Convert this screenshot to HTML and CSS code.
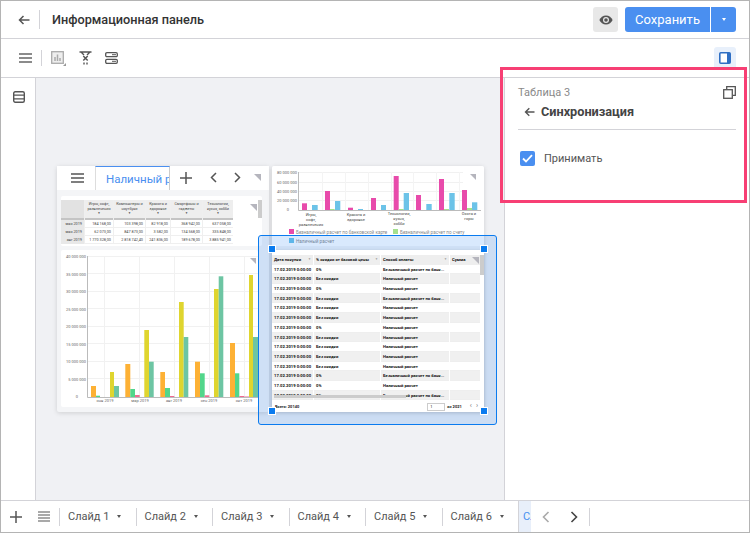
FILE: index.html
```html
<!DOCTYPE html>
<html lang="ru">
<head>
  <meta charset="UTF-8" />
  <title>Информационная панель</title>
  <link rel="stylesheet" href="styles.css">
</head>
<body>
  <div class="app">
    <header class="topbar">
      <svg class="back-icon" width="12" height="10" viewBox="0 0 12 10"><path d="M11.5 5H1.5M5.5 1L1.5 5l4 4" fill="none" stroke="#555" stroke-width="1.5"/></svg>
      <span class="topbar-sep"></span>
      <h1 class="title">Информационная панель</h1>
      <button class="eye-btn" type="button">
        <svg width="14" height="10" viewBox="0 0 14 10"><path d="M7 0.5C4 0.5 1.5 2.4 0.4 5 1.5 7.6 4 9.5 7 9.5s5.500-1.900 6.600-4.500C12.500 2.400 10 0.500 7 0.500z" fill="#555"/><circle cx="7" cy="5" r="3" fill="#e8e8e8"/><circle cx="7" cy="5" r="1.800" fill="#555"/></svg>
      </button>
      <div class="save">
        <button class="save-main" type="button">Сохранить</button>
        <button class="save-more" type="button"><span class="caret caret-white"></span></button>
      </div>
    </header>

    <div class="toolbar">
      <svg class="tool-icon" width="13" height="10" viewBox="0 0 13 10"><path d="M0 1h13M0 5h13M0 9h13" stroke="#666" stroke-width="1.300"/></svg>
      <span class="toolbar-sep"></span>
      <svg class="tool-icon" width="15" height="15" viewBox="0 0 15 15"><rect x="0.700" y="0.700" width="11.600" height="11.600" fill="#eee" stroke="#aaa" stroke-width="1.300"/><path d="M4 10V6M6.500 10V3.500M9 10V7" stroke="#aaa" stroke-width="1.500"/><path d="M15 12v3h-3z" fill="#999"/></svg>
      <svg class="tool-icon" width="13" height="14" viewBox="0 0 13 14"><path d="M0.500 1h12M2 1l3 3M11 1L8 4M5 13.500v-2M8 13.500v-2" fill="none" stroke="#555" stroke-width="1.400"/><path d="M4.300 5l4.400 4.500M8.700 5l-4.400 4.500" stroke="#555" stroke-width="1.500"/></svg>
      <svg class="tool-icon" width="13" height="12" viewBox="0 0 13 12"><rect x="0.700" y="0.700" width="11.600" height="4" rx="1.200" fill="none" stroke="#555" stroke-width="1.300"/><rect x="0.700" y="7.300" width="11.600" height="4" rx="1.200" fill="none" stroke="#555" stroke-width="1.300"/><path d="M7 2.700h4M7 9.300h4" stroke="#555" stroke-width="1"/></svg>
      <button class="panel-btn" type="button">
        <svg width="12" height="12" viewBox="0 0 12 12"><rect x="0.800" y="0.800" width="10.400" height="10.400" rx="1" fill="#fff" stroke="#2f6fc4" stroke-width="1.600"/><rect x="8" y="1" width="3" height="10" fill="#2f6fc4"/></svg>
      </button>
    </div>

    <div class="workspace">
      <aside class="rail">
        <svg class="rail-icon" width="12" height="12" viewBox="0 0 12 12"><rect x="0.700" y="0.700" width="10.600" height="10.600" rx="1.500" fill="none" stroke="#555" stroke-width="1.400"/><path d="M1 4.200h10M1 7.800h10" stroke="#555" stroke-width="1.300"/></svg>
      </aside>

      <main class="canvas">
        <section class="sheet sheet-left">
          <div class="tabstrip">
            <svg class="strip-menu" width="13" height="10" viewBox="0 0 13 10"><path d="M0 1h13M0 5h13M0 9h13" stroke="#555" stroke-width="1.300"/></svg>
            <div class="strip-tab"><span>Наличный расчет</span></div>
            <svg class="strip-plus" width="12" height="12" viewBox="0 0 12 12"><path d="M6 0v12M0 6h12" stroke="#555" stroke-width="1.500"/></svg>
            <svg class="strip-prev" width="7" height="11" viewBox="0 0 7 11"><path d="M6 1L1.500 5.500 6 10" fill="none" stroke="#555" stroke-width="1.500"/></svg>
            <svg class="strip-next" width="7" height="11" viewBox="0 0 7 11"><path d="M1 1l4.500 4.500L1 10" fill="none" stroke="#555" stroke-width="1.500"/></svg>
            <span class="corner corner-strip"></span>
          </div>
          <div class="mini-card pivot">
            <div class="pivot-grid">
              <div class="ph ph-blank"></div>
              <div class="ph">Игры, софт, развлечения<i>▼</i></div>
              <div class="ph">Компьютеры и ноутбуки<i>▼</i></div>
              <div class="ph">Красота и здоровье<i>▼</i></div>
              <div class="ph">Смартфоны и гаджеты<i>▼</i></div>
              <div class="ph">Технологии, кухня, хобби<i>▼</i></div>
              <div class="pl">мая 2019</div><div class="pv">184 168,00</div><div class="pv">103 398,00</div><div class="pv">82 918,00</div><div class="pv">368 942,00</div><div class="pv">637 058,00</div>
              <div class="pl">мая 2019</div><div class="pv">62 073,00</div><div class="pv">847 873,00</div><div class="pv">3 582,00</div><div class="pv">134 568,00</div><div class="pv">335 848,00</div>
              <div class="pl">авг 2019</div><div class="pv">1 770 328,00</div><div class="pv">2 818 742,40</div><div class="pv">241 836,00</div><div class="pv">189 678,00</div><div class="pv">3 885 941,00</div>
            </div>
            <span class="corner corner-pivot"></span>
            <span class="vscroll vscroll-pivot"></span>
          </div>
          <div class="mini-card bars-card">
            <svg class="chart" width="197" height="157" viewBox="61 250 197 157">
              <g stroke="#f1f1f1" stroke-width="1">
                <path d="M87 256.500h171M87 273.500h171M87 291.500h171M87 308.500h171M87 326.500h171M87 343.500h171M87 361.500h171M87 378.500h171"/>
                <path d="M104.500 256v141M139.500 256v141M174.500 256v141M209.500 256v141M244.500 256v141"/>
              </g>
              <g fill="#fdb135">
                <rect x="91" y="386" width="5" height="11"/><rect x="125.300" y="364" width="5" height="33"/><rect x="160.300" y="372" width="4.700" height="25"/><rect x="195" y="361.700" width="5" height="35.300"/><rect x="230" y="343" width="5" height="54"/>
              </g>
              <g fill="#52d68b">
                <rect x="96" y="395.700" width="4" height="1.300"/><rect x="130.300" y="389" width="4.700" height="8"/><rect x="165" y="388" width="5" height="9"/><rect x="200" y="373.300" width="4.700" height="23.700"/><rect x="235" y="373.300" width="4.300" height="23.700"/>
              </g>
              <g fill="#f06a92">
                <rect x="135" y="395" width="4.700" height="2"/><rect x="170" y="396" width="4.300" height="1"/><rect x="204.700" y="395.300" width="4.600" height="1.700"/><rect x="239.300" y="396" width="4.700" height="1"/>
              </g>
              <rect x="244" y="396" width="5" height="1" fill="#f3b4c8"/>
              <g fill="#dfd52f">
                <rect x="110" y="372" width="4" height="25"/><rect x="144.300" y="330" width="4.700" height="67"/><rect x="179" y="302" width="4.700" height="95"/><rect x="214" y="289" width="4.700" height="108"/><rect x="249" y="275" width="4" height="122"/>
              </g>
              <g fill="#6dc5a3">
                <rect x="114" y="386" width="5" height="11"/><rect x="149" y="361.700" width="4.700" height="35.300"/><rect x="183.700" y="337" width="4.600" height="60"/><rect x="218.700" y="276.300" width="4.600" height="120.700"/><rect x="253" y="337" width="5" height="60"/>
              </g>
              <path d="M87.500 256v141.500H258" fill="none" stroke="#bbb" stroke-width="1"/>
              <g class="axis-text" text-anchor="end">
                <text x="86" y="258">40 000 000</text><text x="86" y="276">35 000 000</text><text x="86" y="293">30 000 000</text><text x="86" y="311">25 000 000</text><text x="86" y="328">20 000 000</text><text x="86" y="346">15 000 000</text><text x="86" y="363">10 000 000</text><text x="86" y="381">5 000 000</text><text x="78" y="398">0</text>
              </g>
              <g class="axis-text" text-anchor="middle">
                <text x="105" y="402">янв 2019</text><text x="140" y="402">мар 2019</text><text x="174" y="402">авг 2019</text><text x="209" y="402">сен 2019</text><text x="244" y="402">окт 2019</text>
              </g>
              <path d="M250 258h6v6z" fill="#b5b5bd"/>
            </svg>
          </div>
        </section>

        <section class="sheet sheet-right">
          <div class="mini-card pie-card">
            <svg class="chart" width="212" height="80" viewBox="272 166 212 80">
              <path d="M298 172.500h165M298 182.500h165M298 191.500h165M298 200.500h165" stroke="#f1f1f1" stroke-width="1"/>
              <path d="M322.500 172v38M345.500 172v38M368.500 172v38M391.500 172v38M413.500 172v38M436.500 172v38M459.500 172v38" stroke="#f4f4f4" stroke-width="1"/>
              <g fill="#e84bab">
                <rect x="302" y="203.300" width="5" height="6.700"/><rect x="325" y="191" width="5" height="19"/><rect x="348" y="207.700" width="5" height="2.300"/><rect x="371" y="198" width="5" height="12"/><rect x="393.700" y="176" width="5" height="34"/><rect x="416" y="195" width="5" height="15"/><rect x="439" y="179" width="5" height="31"/><rect x="462" y="190" width="5" height="20"/>
              </g>
              <g fill="#a5e08e">
                <rect x="330" y="209" width="4.700" height="1"/><rect x="398.700" y="209" width="5" height="1"/><rect x="444" y="209" width="5" height="1"/><rect x="467" y="208" width="5" height="2"/>
              </g>
              <g fill="#6cc3e8">
                <rect x="312" y="205" width="5.700" height="5"/><rect x="335" y="201" width="5.300" height="9"/><rect x="358" y="209" width="5" height="1"/><rect x="381" y="205" width="5" height="5"/><rect x="403.700" y="193" width="5.300" height="17"/><rect x="426.300" y="204" width="5.400" height="6"/><rect x="449.300" y="193" width="5.400" height="17"/><rect x="472" y="202.300" width="5.300" height="7.700"/>
              </g>
              <path d="M298.500 172v38.500H481" fill="none" stroke="#bbb" stroke-width="1"/>
              <g class="axis-text" text-anchor="end">
                <text x="297" y="174">80 000 000</text><text x="297" y="184">60 000 000</text><text x="297" y="193">40 000 000</text><text x="297" y="202">20 000 000</text><text x="289" y="211">0</text>
              </g>
              <g class="axis-text axis-dark" text-anchor="middle">
                <text x="311" y="216">Игры,</text><text x="311" y="221">софт,</text><text x="311" y="226">развлечения</text>
                <text x="356" y="216">Красота и</text><text x="356" y="221">здоровье</text>
                <text x="399" y="215">Технологии,</text><text x="399" y="220">кухня,</text><text x="399" y="225">хобби</text>
                <text x="469" y="215">Охота и</text><text x="469" y="220">горы</text>
              </g>
              <rect x="289" y="229" width="5" height="5" fill="#e84bab"/>
              <text class="legend-text" x="296" y="233.500">Безналичный расчет по банковской карте</text>
              <rect x="393" y="229" width="5" height="5" fill="#a5e08e"/>
              <text class="legend-text" x="400" y="233.500">Безналичный расчет по счету</text>
              <rect x="289" y="238" width="5" height="5" fill="#6cc3e8"/>
              <text class="legend-text" x="296" y="242.500">Наличный расчет</text>
              <path d="M470 174h6v6z" fill="#b5b5bd"/>
            </svg>
          </div>
          <div class="mini-card grid-card">
            <div class="grid-scroll">
              <div class="data-grid">
                <div class="gh">Дата покупки<i>▼</i></div><div class="gh">% скидки от базовой цены<i>▼</i></div><div class="gh">Способ оплаты<i>▼</i></div><div class="gh">Сумма</div>
                <div class="gc">17.02.2019 0:00:00</div><div class="gc">0%</div><div class="gc">Безналичный расчет по банк...</div><div class="gc"></div>
                <div class="gc">17.02.2019 0:00:00</div><div class="gc">Без скидки</div><div class="gc">Наличный расчет</div><div class="gc"></div>
                <div class="gc">17.02.2019 0:00:00</div><div class="gc">0%</div><div class="gc">Наличный расчет</div><div class="gc"></div>
                <div class="gc">17.02.2019 0:00:00</div><div class="gc">Без скидки</div><div class="gc">Безналичный расчет по банк...</div><div class="gc"></div>
                <div class="gc">17.02.2019 0:00:00</div><div class="gc">Без скидки</div><div class="gc">Наличный расчет</div><div class="gc"></div>
                <div class="gc">17.02.2019 0:00:00</div><div class="gc">Без скидки</div><div class="gc">Наличный расчет</div><div class="gc"></div>
                <div class="gc">17.02.2019 0:00:00</div><div class="gc">0%</div><div class="gc">Наличный расчет</div><div class="gc"></div>
                <div class="gc">17.02.2019 0:00:00</div><div class="gc">Без скидки</div><div class="gc">Наличный расчет</div><div class="gc"></div>
                <div class="gc">17.02.2019 0:00:00</div><div class="gc">Без скидки</div><div class="gc">Наличный расчет</div><div class="gc"></div>
                <div class="gc">17.02.2019 0:00:00</div><div class="gc">Без скидки</div><div class="gc">Наличный расчет</div><div class="gc"></div>
                <div class="gc">17.02.2019 0:00:00</div><div class="gc">Без скидки</div><div class="gc">Наличный расчет</div><div class="gc"></div>
                <div class="gc">17.02.2019 0:00:00</div><div class="gc">0%</div><div class="gc">Безналичный расчет по банк...</div><div class="gc"></div>
                <div class="gc">17.02.2019 0:00:00</div><div class="gc">0%</div><div class="gc">Наличный расчет</div><div class="gc"></div>
                <div class="gc">17.02.2019 0:00:00</div><div class="gc">0%</div><div class="gc">Безналичный расчет по банк...</div><div class="gc"></div>
              </div>
              <span class="vscroll vscroll-grid"></span>
              <span class="hscroll"></span>
              <span class="corner corner-grid"></span>
            </div>
            <div class="grid-foot">
              <span class="foot-total">Всего: 20140</span>
              <span class="foot-page">1</span>
              <span class="foot-of">из 2021</span>
              <span class="foot-nav">‹</span>
              <span class="foot-nav">›</span>
            </div>
          </div>
        </section>

        <div class="selection">
          <span class="handle handle-tl"></span>
          <span class="handle handle-tr"></span>
          <span class="handle handle-bl"></span>
          <span class="handle handle-br"></span>
        </div>
      </main>

      <aside class="side">
        <div class="side-head">
          <span class="side-name">Таблица 3</span>
          <svg width="13" height="13" viewBox="0 0 13 13"><path d="M3.700 3V0.700h8.600v8.600H10" fill="none" stroke="#555" stroke-width="1.300"/><rect x="0.700" y="3.700" width="8.600" height="8.600" fill="none" stroke="#555" stroke-width="1.300"/></svg>
        </div>
        <div class="side-title">
          <svg width="11" height="10" viewBox="0 0 11 10"><path d="M10.500 5H1.500M5.300 1.200L1.500 5l3.800 3.800" fill="none" stroke="#555" stroke-width="1.400"/></svg>
          <h2>Синхронизация</h2>
        </div>
        <label class="check-row">
          <span class="checkbox">
            <svg width="11" height="9" viewBox="0 0 11 9"><path d="M1 4.500l3 3L10 1.200" fill="none" stroke="#fff" stroke-width="1.800"/></svg>
          </span>
          Принимать
        </label>
      </aside>
    </div>

    <footer class="slides">
      <svg class="slides-plus" width="12" height="12" viewBox="0 0 12 12"><path d="M6 0v12M0 6h12" stroke="#555" stroke-width="1.500"/></svg>
      <svg class="slides-list" width="12" height="11" viewBox="0 0 12 11"><path d="M0 1h12M0 4h12M0 7h12M0 10h12" stroke="#555" stroke-width="1.200"/></svg>
      <div class="slide-tab">Слайд 1 <span class="caret"></span></div>
      <div class="slide-tab">Слайд 2 <span class="caret"></span></div>
      <div class="slide-tab">Слайд 3 <span class="caret"></span></div>
      <div class="slide-tab">Слайд 4 <span class="caret"></span></div>
      <div class="slide-tab">Слайд 5 <span class="caret"></span></div>
      <div class="slide-tab">Слайд 6 <span class="caret"></span></div>
      <div class="slide-active"><span>Слайд 7</span></div>
      <svg class="slides-prev" width="8" height="12" viewBox="0 0 8 12"><path d="M6.500 1L1.500 6l5 5" fill="none" stroke="#aaa" stroke-width="1.600"/></svg>
      <svg class="slides-next" width="8" height="12" viewBox="0 0 8 12"><path d="M1.500 1l5 5-5 5" fill="none" stroke="#444" stroke-width="1.600"/></svg>
      <span class="slides-end"></span>
    </footer>

    <div class="callout"></div>
  </div>
</body>
</html>
```

FILE: styles.css
```css
* {
  box-sizing: border-box;
}
body {
  margin: 0;
  font-family: Roboto, "Liberation Sans", sans-serif;
  background: #fff;
}
.app {
  position: relative;
  display: flex;
  flex-direction: column;
  width: 750px;
  height: 533px;
  border: 1px solid #b4b4b4;
  overflow: hidden;
}
button {
  border: none;
  padding: 0;
  font-family: inherit;
}
.caret {
  display: inline-block;
  width: 0;
  height: 0;
  border-left: 2.500px solid transparent;
  border-right: 2.500px solid transparent;
  border-top: 3px solid #555;
}
.caret-white {
  border-top-color: #fff;
}

/* top bar */
.topbar {
  display: flex;
  align-items: center;
  height: 38px;
  flex: none;
  border-bottom: 1px solid #d3d3d8;
  padding: 0 13px 0 17px;
}
.topbar-sep {
  width: 1px;
  height: 19px;
  margin: 0 12px 0 9px;
  background: #d3d3d8;
}
.title {
  margin: 0;
  flex: 1;
  font-size: 12.700px;
  font-weight: 500;
  color: #333;
}
.eye-btn {
  display: flex;
  align-items: center;
  justify-content: center;
  width: 25px;
  height: 25px;
  background: #e8e8e8;
  border-radius: 3px;
  margin-right: 7px;
}
.save {
  display: flex;
  gap: 1px;
}
.save-main {
  width: 85px;
  height: 25px;
  background: #4a8ff0;
  color: #fff;
  font-size: 13px;
  border-radius: 3px 0 0 3px;
}
.save-more {
  display: flex;
  align-items: center;
  justify-content: center;
  width: 25px;
  height: 25px;
  background: #4a8ff0;
  border-radius: 0 3px 3px 0;
}

/* second toolbar */
.toolbar {
  display: flex;
  align-items: center;
  height: 39px;
  flex: none;
  border-bottom: 1px solid #d3d3d8;
  padding: 0 13px 0 18px;
}
.toolbar-sep {
  width: 1px;
  height: 16px;
  margin: 0 9px;
  background: #d3d3d8;
}
.tool-icon {
  flex: none;
  margin-right: 13px;
}
.toolbar .tool-icon:first-child {
  margin-right: 0;
}
.panel-btn {
  display: flex;
  align-items: center;
  justify-content: center;
  width: 22px;
  height: 22px;
  margin-left: auto;
  background: #e8f0fb;
  border-radius: 3px;
}

/* work area */
.workspace {
  display: flex;
  flex: 1;
  min-height: 0;
}
.rail {
  width: 35px;
  flex: none;
  padding: 13px 0 0 12px;
  border-right: 1px solid #d3d3d8;
}
.rail-icon {
  display: block;
}
.canvas {
  position: relative;
  width: 468px;
  flex: none;
  background: #f0f1f4;
  overflow: hidden;
}
.side {
  flex: 1;
  border-left: 1px solid #d3d3d8;
  padding: 7px 13px 0 13px;
}
.side-head {
  display: flex;
  justify-content: space-between;
  align-items: center;
  height: 15px;
}
.side-name {
  font-size: 11px;
  color: #8a8a8a;
}
.side-title {
  display: flex;
  align-items: center;
  gap: 6px;
  height: 30px;
  padding: 0 0 6px 6px;
  margin-bottom: 21px;
  border-bottom: 1px solid #d3d3d8;
}
.side-title h2 {
  margin: 0;
  font-size: 12.700px;
  font-weight: 700;
  color: #444;
}
.check-row {
  display: flex;
  align-items: center;
  gap: 9px;
  padding-left: 2px;
  font-size: 11px;
  color: #555;
}
.checkbox {
  display: flex;
  align-items: center;
  justify-content: center;
  width: 15px;
  height: 15px;
  background: #4a8ff0;
  border-radius: 2px;
}

/* report sheets on the canvas */
.sheet {
  position: absolute;
  box-shadow: 0 1px 5px rgba(0, 0, 0, 0.14);
  border-radius: 2px;
}
.sheet-left {
  left: 21px;
  top: 88px;
  width: 212px;
  height: 246px;
  background: #f4f5f7;
}
.sheet-right {
  left: 236px;
  top: 88px;
  width: 212px;
  height: 246px;
  background: #f4f5f7;
}
.tabstrip {
  position: relative;
  height: 24px;
  background: #fff;
}
.tabstrip > svg,
.corner {
  position: absolute;
}
.strip-menu {
  left: 14px;
  top: 7px;
}
.strip-tab {
  position: absolute;
  left: 38px;
  top: 0;
  width: 75px;
  height: 24px;
  border-top: 1px solid #4a8ff0;
  border-left: 1px solid #ddd;
  border-right: 1px solid #ccc;
  padding: 5px 0 0 10px;
  font-size: 11.500px;
  color: #4a8ff0;
  white-space: nowrap;
  overflow: hidden;
}
.strip-plus {
  left: 123px;
  top: 6px;
}
.strip-prev {
  left: 153px;
  top: 6px;
}
.strip-next {
  left: 177px;
  top: 6px;
}
.corner {
  width: 7px;
  height: 7px;
  background: #b5b5bd;
  clip-path: polygon(0 0, 100% 0, 100% 100%);
}
.corner-strip {
  left: 197px;
  top: 8px;
}
.mini-card {
  position: relative;
  background: #fff;
  border-radius: 2px;
  overflow: hidden;
}
.pivot {
  margin: 6px 0 0 4px;
  width: 201px;
  height: 50px;
  padding-top: 4px;
}
.pivot-grid {
  display: grid;
  grid-template-columns: 23px 28px 31px 24px 31px 30px;
  grid-template-rows: 20px 8px 8px 8px;
  gap: 0 1px;
  width: 172px;
  font-size: 3.800px;
  color: #444;
  background: #efefef;
}
.ph {
  background: #eee;
  text-align: center;
  padding: 2px 1px 0;
  line-height: 4.500px;
  border-bottom: 2px solid #c4c4c4;
}
.ph-blank {
  background: #e2e2e2;
}
.ph i {
  display: block;
  font-style: normal;
  font-size: 3px;
}
.pl {
  background: #e8e8e8;
  text-align: right;
  padding-right: 2px;
  line-height: 8px;
}
.pv {
  background: #fff;
  text-align: right;
  padding-right: 2px;
  line-height: 7px;
  margin-bottom: 1px;
}
.corner-pivot {
  right: 5px;
  top: 8px;
}
.vscroll {
  position: absolute;
  background: #ccc;
}
.vscroll-pivot {
  right: 0;
  top: 4px;
  width: 4px;
  height: 18px;
}
.bars-card {
  margin: 4px 0 0 4px;
  width: 197px;
  height: 157px;
}
.chart {
  display: block;
}
.axis-text {
  font-size: 4px;
  fill: #666;
}
.axis-dark {
  fill: #444;
}
.legend-text {
  font-size: 4.600px;
  fill: #888;
}
.pie-card {
  width: 212px;
  height: 80px;
  border-radius: 2px 2px 0 0;
}
.grid-card {
  z-index: 1;
  margin-top: 4px;
  width: 212px;
  height: 162px;
  box-shadow: 0 0 3px rgba(0, 0, 0, 0.1);
}
.grid-scroll {
  position: relative;
  height: 151px;
  overflow: hidden;
}
.data-grid {
  display: grid;
  grid-template-columns: 41px 66px 68px 30px;
  grid-auto-rows: 9.700px;
  gap: 0 1px;
  padding-top: 5px;
  width: 208px;
  font-size: 4.200px;
  font-weight: 700;
  color: #111;
}
.gh {
  position: relative;
  background: #eee;
  padding-left: 2px;
  line-height: 9px;
}
.gh i {
  position: absolute;
  right: 2px;
  top: 0;
  font-style: normal;
  font-size: 3px;
  color: #999;
}
.gc {
  padding-left: 2px;
  line-height: 9px;
  background: #fff;
  border-bottom: 1px solid #eee;
  white-space: nowrap;
  overflow: hidden;
}
.gc:nth-child(8n + 1),
.gc:nth-child(8n + 2),
.gc:nth-child(8n + 3),
.gc:nth-child(8n + 4) {
  background: #f0f0f0;
}
.vscroll-grid {
  right: 0;
  top: 5px;
  width: 4px;
  height: 20px;
}
.hscroll {
  position: absolute;
  left: 2px;
  bottom: 3px;
  width: 132px;
  height: 3px;
  background: #ccc;
}
.corner-grid {
  right: 5px;
  top: 7px;
}
.grid-foot {
  display: flex;
  align-items: center;
  height: 11px;
  padding: 0 6px 0 3px;
  font-size: 4px;
  font-weight: 700;
  color: #222;
}
.foot-total {
  flex: 1;
}
.foot-page {
  width: 18px;
  height: 8px;
  border: 1px solid #ccc;
  padding-left: 2px;
  line-height: 6px;
  font-weight: 400;
  margin-right: 2px;
}
.foot-of {
  margin-right: 4px;
}
.foot-nav {
  font-size: 7px;
  font-weight: 400;
  color: #777;
  margin-left: 4px;
  line-height: 7px;
}

/* selected widget frame */
.selection {
  position: absolute;
  left: 222px;
  top: 157px;
  width: 239px;
  height: 190px;
  background: rgba(20, 120, 240, 0.16);
  border: 1px solid #0a7bef;
  border-radius: 3px;
}
.handle {
  position: absolute;
  z-index: 2;
  width: 6px;
  height: 6px;
  background: #0a7bef;
  outline: 1px solid #fff;
}
.handle-tl {
  left: 10px;
  top: 10px;
}
.handle-tr {
  left: 222px;
  top: 10px;
}
.handle-bl {
  left: 10px;
  top: 172px;
}
.handle-br {
  left: 222px;
  top: 172px;
}

/* slides bar */
.slides {
  position: relative;
  display: flex;
  align-items: center;
  height: 32px;
  flex: none;
  border-top: 1px solid #d3d3d8;
  padding-left: 9px;
  font-size: 11px;
  color: #555;
}
.slides-plus {
  flex: none;
}
.slides-list {
  flex: none;
  margin: 0 9px 0 16px;
}
.slide-tab {
  display: flex;
  align-items: center;
  gap: 8px;
  flex: none;
  width: 76.500px;
  height: 18px;
  padding-left: 8px;
  border-left: 1px solid #d3d3d8;
}
.slide-active {
  flex: none;
  width: 13px;
  height: 31px;
  padding: 9px 0 0 4px;
  border-left: 1px solid #d3d3d8;
  background: #e8effa;
  color: #4a8ff0;
  white-space: nowrap;
  overflow: hidden;
}
.slides-prev {
  flex: none;
  margin-left: 11px;
}
.slides-next {
  flex: none;
  margin-left: 20px;
}
.slides-end {
  flex: none;
  width: 1px;
  height: 18px;
  margin-left: 11px;
  background: #d3d3d8;
}

/* annotation drawn over the shot */
.callout {
  position: absolute;
  left: 499px;
  top: 66px;
  width: 247px;
  height: 136px;
  border: 3px solid #f73f74;
  pointer-events: none;
}
```
